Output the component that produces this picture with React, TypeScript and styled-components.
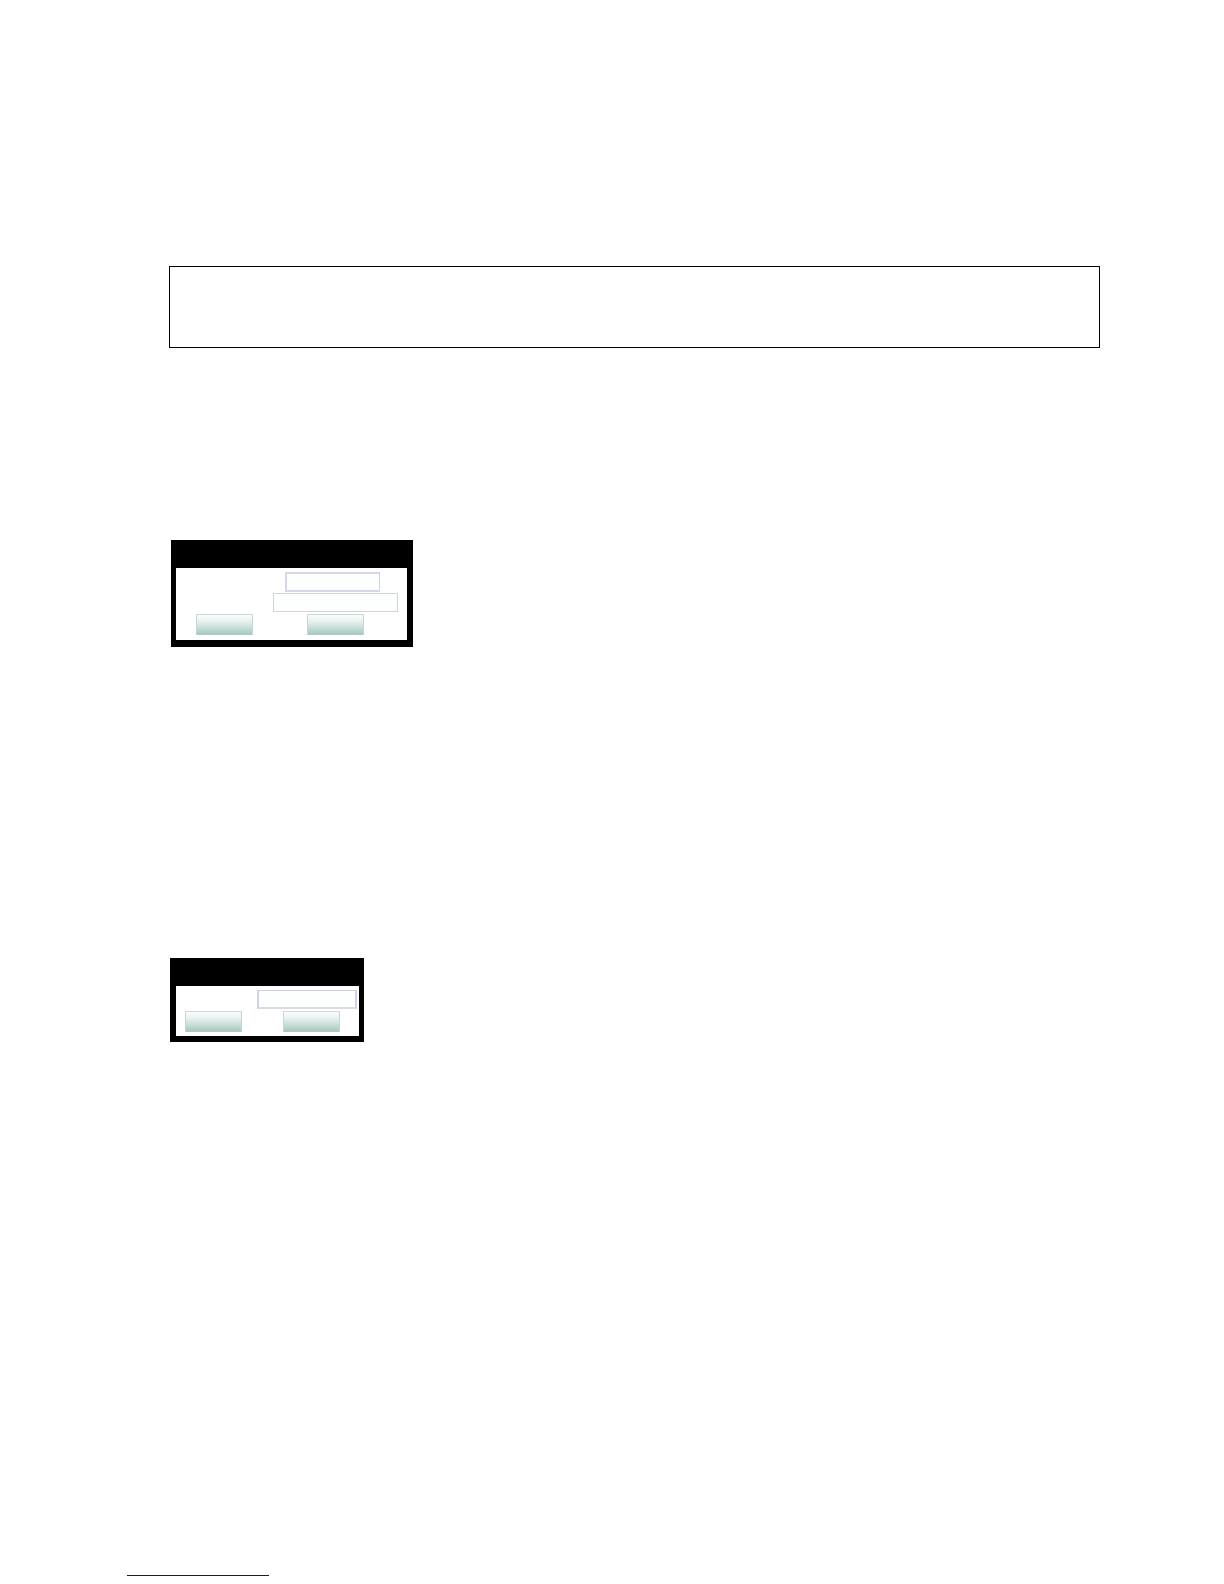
import React from "react";
import styled, { createGlobalStyle } from "styled-components";

const GlobalStyle = createGlobalStyle`
  *, *::before, *::after { box-sizing: border-box; }
  body {
    margin: 0;
    background: #ffffff;
    font-family: "Liberation Sans", Arial, sans-serif;
    font-size: 12px;
  }
`;

const Page = styled.div`
  display: flex;
  flex-direction: column;
  min-height: 100vh;
  padding: 266px 124px 8px 127px;
`;

const Content = styled.main`
  display: flex;
  flex-direction: column;
  align-items: flex-start;
  padding-left: 42px;
`;

const Notice = styled.section`
  align-self: stretch;
  min-height: 82px;
  margin-bottom: 192px;
  border: 1px solid #000000;
`;

const Dialog = styled.form<{ $indent: number; $after: number }>`
  margin: 0 0 ${(p) => p.$after}px ${(p) => p.$indent}px;
  background: #000000;
`;

const TitleBar = styled.header`
  height: 28px;
`;

const DialogBody = styled.div<{ $edges: string; $pad: string }>`
  display: flex;
  flex-direction: column;
  gap: 1px;
  border: solid #000000;
  border-width: ${(p) => p.$edges};
  padding: ${(p) => p.$pad};
  background: #ffffff;
`;

const Row = styled.div`
  display: flex;
`;

const Label = styled.label<{ $width: number }>`
  flex: none;
  width: ${(p) => p.$width}px;
`;

const Field = styled.input<{ $width: number; $height: number; $edges: string; $tone: string }>`
  display: block;
  width: ${(p) => p.$width}px;
  height: ${(p) => p.$height}px;
  margin: 0;
  padding: 0 4px;
  border-style: solid;
  border-color: ${(p) => p.$tone};
  border-width: ${(p) => p.$edges};
  border-radius: 0;
  background: #fdfefe;
  font: inherit;
  outline: none;
`;

const Actions = styled.div<{ $gap: number; $left: number }>`
  display: flex;
  gap: ${(p) => p.$gap}px;
  padding: 1px 0 0 ${(p) => p.$left}px;
`;

const ActionButton = styled.button`
  width: 57px;
  height: 21px;
  margin: 0;
  padding: 0;
  border: 1px solid;
  border-color: #d0d5d5 #c6d6d3 #afcac3 #c6d6d3;
  border-radius: 1px;
  background: linear-gradient(#fafcfc 0%, #eaf3f2 30%, #c9dfda 65%, #a9c9c1 100%);
  font: inherit;
`;

const Footer = styled.footer`
  display: flex;
  margin-top: auto;
`;

const FooterLink = styled.a`
  display: block;
  width: 142px;
  height: 20px;
  border-bottom: 1px solid #10108c;
`;

export default function App() {
  return (
    <>
      <GlobalStyle />
      <Page>
        <Content>
          <Notice aria-label="Note" />

          <Dialog $indent={2} $after={311} onSubmit={(e) => e.preventDefault()}>
            <TitleBar />
            <DialogBody $edges="0 6px 7px 5px" $pad="4px 9px 5px 0">
              <Row>
                <Label htmlFor="account-name" $width={109} />
                <Field id="account-name" aria-label="Name" $width={95} $height={20} $edges="2px 1px 2px 2px" $tone="#d8d5ec #d3d4db #d8d5ec #d8d5ec" />
              </Row>
              <Row>
                <Label htmlFor="account-value" $width={97} />
                <Field id="account-value" aria-label="Value" $width={125} $height={19} $edges="1px" $tone="#d3d4db" />
              </Row>
              <Actions $gap={54} $left={20}>
                <ActionButton type="submit" aria-label="OK" />
                <ActionButton type="button" aria-label="Cancel" />
              </Actions>
            </DialogBody>
          </Dialog>

          <Dialog $indent={1} $after={0} onSubmit={(e) => e.preventDefault()}>
            <TitleBar />
            <DialogBody $edges="0 5px 6px 6px" $pad="4px 2px 4px 0">
              <Row>
                <Label htmlFor="code" $width={81} />
                <Field id="code" aria-label="Code" $width={100} $height={19} $edges="1px 2px 2px 2px" $tone="#d0cfda #d2d0e6 #dcdbe4 #d3d3dd" />
              </Row>
              <Actions $gap={41} $left={9}>
                <ActionButton type="submit" aria-label="OK" />
                <ActionButton type="button" aria-label="Cancel" />
              </Actions>
            </DialogBody>
          </Dialog>
        </Content>

        <Footer>
          <FooterLink href="#contents" aria-label="Contents" />
        </Footer>
      </Page>
    </>
  );
}
